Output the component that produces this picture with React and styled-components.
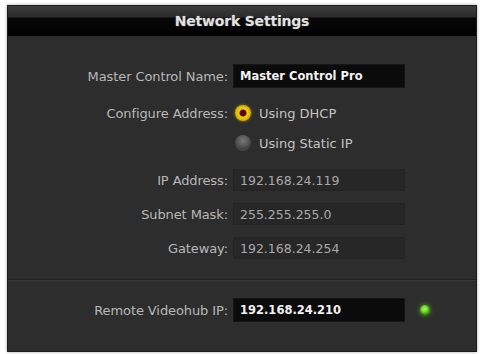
import styled, { createGlobalStyle } from "styled-components";

const GlobalStyle = createGlobalStyle`
  html, body {
    margin: 0;
    padding: 0;
    background: #ffffff;
  }
  body {
    font-family: "DejaVu Sans", "Liberation Sans", sans-serif;
  }
`;

const rows = [
  { id: "ip", label: "IP Address:", value: "192.168.24.119", top: 16 },
  { id: "mask", label: "Subnet Mask:", value: "255.255.255.0", top: 12 },
  { id: "gw", label: "Gateway:", value: "192.168.24.254", top: 12 },
];

const App = () => {
  return (
    <>
      <GlobalStyle />
      <Page>
        <Window>
          <TitleBar>Network Settings</TitleBar>
          <Body>
            <Row top={28}>
              <Label>Master Control Name:</Label>
              <Field active>Master Control Pro</Field>
            </Row>

            <Row top={15}>
              <Label>Configure Address:</Label>
              <Option>
                <Radio checked />
                Using DHCP
              </Option>
            </Row>
            <Row top={10}>
              <span />
              <Option>
                <Radio />
                Using Static IP
              </Option>
            </Row>

            {rows.map(({ id, label, value, top }) => (
              <Row top={top} key={id}>
                <Label>{label}</Label>
                <Field>{value}</Field>
              </Row>
            ))}

            <Divider />

            <Row top={17}>
              <Label>Remote Videohub IP:</Label>
              <Field active>192.168.24.210</Field>
              <Led />
            </Row>
          </Body>
        </Window>
      </Page>
    </>
  );
};

export default App;

const Page = styled.div`
  width: 481px;
  height: 354px;
  padding: 5px 0 0 7px;
  box-sizing: border-box;
  overflow: hidden;
`;

const Window = styled.div`
  width: 470px;
  height: 347px;
  background: #2d2d2d;
  border: 1px solid #1c1c1c;
  box-sizing: border-box;
  box-shadow: 0 0 3px rgba(0, 0, 0, 0.35);
`;

const TitleBar = styled.div`
  height: 30px;
  display: flex;
  align-items: center;
  justify-content: center;
  box-sizing: border-box;
  background: linear-gradient(
    #3d3d3d 0px,
    #2c2c2c 11px,
    #070707 12px,
    #020202 30px
  );
  color: #e2e2e2;
  font-family: "DejaVu Sans", sans-serif;
  font-weight: bold;
  font-size: 14px;
  letter-spacing: -0.2px;
  text-shadow: 0 0 2px rgba(255, 255, 255, 0.25);
`;

const Body = styled.div`
  display: flex;
  flex-direction: column;
`;

const Row = styled.div`
  display: grid;
  grid-template-columns: 220px 172px 1fr;
  column-gap: 5px;
  align-items: center;
  margin-top: ${({ top }) => top}px;
`;

const Label = styled.div`
  text-align: right;
  color: #b8b8b8;
  font-size: 13px;
  letter-spacing: -0.1px;
  white-space: nowrap;
`;

const Field = styled.div`
  height: ${({ active }) => (active ? 24 : 22)}px;
  display: flex;
  align-items: center;
  padding-left: 6px;
  box-sizing: border-box;
  background: ${({ active }) => (active ? "#0b0b0b" : "#272727")};
  border: 1px solid ${({ active }) => (active ? "#161616" : "#232323")};
  color: ${({ active }) => (active ? "#f2f2f2" : "#a8a8a8")};
  font-size: ${({ active }) => (active ? 11.5 : 12.5)}px;
  font-weight: ${({ active }) => (active ? "bold" : "normal")};
  white-space: nowrap;
`;

const Option = styled.div`
  display: flex;
  align-items: center;
  gap: 8px;
  height: 20px;
  color: #c4c4c4;
  font-size: 13px;
`;

const Radio = styled.span`
  width: 16px;
  height: 16px;
  border-radius: 50%;
  box-sizing: border-box;
  margin-left: 2px;
  background: ${({ checked }) =>
    checked
      ? "radial-gradient(circle, #4a0606 0, #5c0b0b 3px, #f0cf12 4px, #d4ae00 8px)"
      : "radial-gradient(circle at 50% 35%, #777 0, #555 6px, #444 8px)"};
  box-shadow: ${({ checked }) =>
    checked ? "0 0 3px rgba(240, 200, 0, 0.6)" : "none"};
`;

const Divider = styled.div`
  margin-top: 20px;
  height: 0;
  border-top: 1px solid #1f1f1f;
  border-bottom: 1px solid #393939;
`;

const Led = styled.span`
  width: 10px;
  height: 10px;
  margin-left: 10px;
  border-radius: 50%;
  background: radial-gradient(circle at 45% 40%, #b6ff6a 0, #6fd626 3px, #3e9a12 5px);
  box-shadow: 0 0 5px rgba(110, 230, 40, 0.7);
`;
